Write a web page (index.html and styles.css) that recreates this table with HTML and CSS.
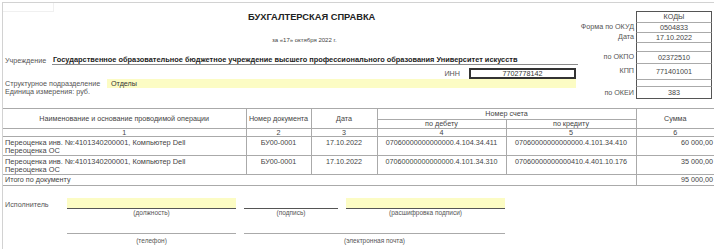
FILE: index.html
```html
<!DOCTYPE html>
<html lang="ru">
<head>
<meta charset="utf-8">
<title>Бухгалтерская справка</title>
<link rel="stylesheet" href="styles.css">
</head>
<body>
<div class="page">
  <div class="tab"></div>
  <div class="head">
    <div class="main">
      <div class="title">БУХГАЛТЕРСКАЯ СПРАВКА</div>
      <div class="period">за «17» октября 2022 г.</div>
      <div class="org">
        <div class="org-label">Учреждение</div>
        <div class="org-value">Государственное образовательное бюджетное учреждение высшего профессионального образования Университет искусств</div>
      </div>
      <div class="inn">
        <div class="inn-label">ИНН</div>
        <div class="inn-box"><span class="inn-value">7702778142</span></div>
      </div>
      <div class="struct">
        <div class="struct-label">Структурное подразделение</div>
        <div class="struct-value">Отделы</div>
      </div>
      <div class="unit">Единица измерения: руб.</div>
    </div>
    <div class="codes">
      <div class="lbl"></div><div class="val first">КОДЫ</div>
      <div class="lbl">Форма по ОКУД</div><div class="val">0504833</div>
      <div class="lbl">Дата</div><div class="val">17.10.2022</div>
      <div class="lbl"></div><div class="val"></div>
      <div class="lbl">по ОКПО</div><div class="val">02372510</div>
      <div class="lbl">КПП</div><div class="val">771401001</div>
      <div class="lbl"></div><div class="val"></div>
      <div class="lbl">по ОКЕИ</div><div class="val last">383</div>
    </div>
  </div>

  <table class="grid">
    <colgroup>
      <col class="c1"><col class="c2"><col class="c3"><col class="c4"><col class="c5"><col class="c6">
    </colgroup>
    <tr class="h1">
      <td rowspan="2" class="ctr">Наименование и основание проводимой операции</td>
      <td rowspan="2" class="ctr">Номер документа</td>
      <td rowspan="2" class="ctr">Дата</td>
      <td colspan="2" class="ctr">Номер счета</td>
      <td rowspan="2" class="ctr">Сумма</td>
    </tr>
    <tr class="h2">
      <td class="ctr">по дебету</td>
      <td class="ctr">по кредиту</td>
    </tr>
    <tr class="nums">
      <td class="ctr">1</td><td class="ctr">2</td><td class="ctr">3</td><td class="ctr">4</td><td class="ctr">5</td><td class="ctr">6</td>
    </tr>
    <tr class="row">
      <td>Переоценка инв. №:4101340200001, Компьютер Dell<br>Переоценка ОС</td>
      <td class="ctr">БУ00-0001</td>
      <td class="ctr">17.10.2022</td>
      <td class="ctr">07060000000000000.4.104.34.411</td>
      <td class="ctr">07060000000000000.4.101.34.410</td>
      <td class="num">60 000,00</td>
    </tr>
    <tr class="row">
      <td>Переоценка инв. №:4101340200001, Компьютер Dell<br>Переоценка ОС</td>
      <td class="ctr">БУ00-0001</td>
      <td class="ctr">17.10.2022</td>
      <td class="ctr">07060000000000000.4.101.34.310</td>
      <td class="ctr">07060000000000410.4.401.10.176</td>
      <td class="num">35 000,00</td>
    </tr>
    <tr class="total">
      <td colspan="5">Итого по документу</td>
      <td class="num">95 000,00</td>
    </tr>
  </table>

  <div class="sign">
    <div class="sign-label">Исполнитель</div>
    <div class="field yellow"></div>
    <div class="field"></div>
    <div class="field yellow"></div>

    <div></div>
    <div class="cap">(должность)</div>
    <div class="cap">(подпись)</div>
    <div class="cap">(расшифровка подписи)</div>

    <div></div>
    <div class="line"></div>
    <div class="line wide"></div>

    <div></div>
    <div class="cap low">(телефон)</div>
    <div class="cap low wide">(электронная почта)</div>
  </div>
</div>
</body>
</html>
```

FILE: styles.css
```css
* { box-sizing: border-box; }
html, body { margin: 0; padding: 0; background: #fff; }
body {
  font-family: "Liberation Sans", Arial, sans-serif;
  color: #444;
  font-size: 7.2px;
  line-height: 8px;
}
.page {
  position: relative;
  margin: 2px 0 0 2px;
  border-top: 1px solid #d2d2d2;
  border-left: 1px solid #d2d2d2;
  height: 247px;
  overflow: hidden;
}
.tab {
  position: absolute;
  left: 0;
  top: -1px;
  width: 51px;
  height: 10px;
  background: #fff;
  border-right: 1px solid #f0f0f0;
  border-bottom: 1px solid #f0f0f0;
}
.head { display: flex; height: 105px; }
.main { width: 577px; padding-left: 2px; }
.title {
  margin-top: 9px;
  height: 10px;
  line-height: 10px;
  font-size: 9.3px;
  font-weight: bold;
  color: #222;
  padding-left: 243px;
}
.period {
  margin-top: 14px;
  font-size: 6px;
  line-height: 8px;
  padding-left: 267px;
  color: #444;
}
.org {
  margin-top: 11px;
  height: 10px;
  display: flex;
  align-items: flex-end;
  padding-right: 2px;
}
.org-label { width: 47px; color: #555; white-space: nowrap; }
.org-value {
  flex: 1;
  font-weight: bold;
  font-size: 7.4px;
  color: #222;
  white-space: nowrap;
  padding-left: 1px;
  border-bottom: 1px solid #8a8a8a;
  line-height: 9px;
}
.inn {
  margin-top: 3px;
  height: 11px;
  display: flex;
  justify-content: flex-end;
  align-items: center;
  padding-right: 4px;
}
.inn-label { margin-right: 9px; color: #555; }
.inn-box {
  width: 107px;
  height: 11px;
  border: 2px solid #333;
  text-align: center;
  line-height: 7px;
}
.inn-value { text-decoration: underline; color: #333; }
.struct { height: 9px; display: flex; }
.struct-label { width: 102px; color: #555; white-space: nowrap; line-height: 9px; }
.struct-value {
  width: 469px;
  background: #fcfcc4;
  padding-left: 4px;
  line-height: 9px;
  color: #333;
}
.unit { line-height: 8px; color: #555; }

.codes {
  width: 132px;
  padding-top: 8px;
  display: grid;
  grid-template-columns: 56px 76px;
  grid-template-rows: 11px 10px 10px 9px 12px 16px 7px 13px;
  align-content: start;
}
.lbl {
  text-align: right;
  padding-right: 2px;
  color: #555;
  display: flex;
  align-items: center;
  justify-content: flex-end;
  white-space: nowrap;
}
.val {
  border-left: 1px solid #555;
  border-right: 1px solid #555;
  border-top: 1px solid #aaa;
  display: flex;
  align-items: center;
  justify-content: center;
  color: #444;
}
.val.first { border-top-color: #555; }
.val.last { border-bottom: 1px solid #555; }

.grid {
  width: 711px;
  border-collapse: collapse;
  table-layout: fixed;
}
.c1 { width: 243px; }
.c2 { width: 65px; }
.c3 { width: 66px; }
.c4 { width: 129px; }
.c5 { width: 130px; }
.c6 { width: 78px; }
.grid td {
  border: 1px solid #aaa;
  padding: 0 2px;
  vertical-align: middle;
  color: #444;
  white-space: nowrap;
  overflow: hidden;
}
.grid tr > td:first-child { border-left: none; }
.grid tr > td:last-child { border-right: none; }
.grid tr.h2 > td:last-child { border-right: 1px solid #aaa; }
.ctr { text-align: center; }
.num { text-align: right; }
.h1 td { height: 11px; }
.h2 td { height: 9px; }
.nums td { height: 8px; line-height: 7px; }
.row td { height: 19px; vertical-align: top; padding-top: 2px; }
.row td:first-child { font-size: 7.4px; }
.row td.num { padding-right: 1px; }
.total td { height: 11px; }
.total td.num { padding-right: 1px; }

.sign {
  margin-top: 12px;
  display: grid;
  grid-template-columns: 56px 169px 94px 159px;
  grid-template-rows: 11px 8px 17px 11px;
  column-gap: 8px;
}
.sign-label { align-self: end; line-height: 8px; color: #555; padding-left: 2px; white-space: nowrap; }
.field { border-bottom: 1px solid #555; }
.field.yellow { background: #fcfcc4; }
.cap { font-size: 6.5px; line-height: 8px; text-align: center; color: #555; white-space: nowrap; }
.cap.low { padding-top: 3px; }
.line { border-bottom: 1px solid #aaa; }
.wide { grid-column: span 2; }
```
